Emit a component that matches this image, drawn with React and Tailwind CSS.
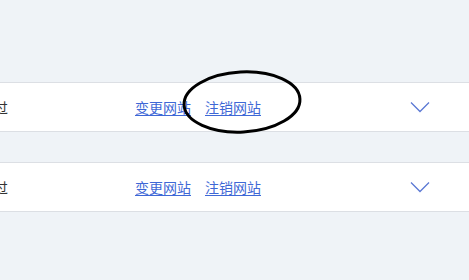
import React from "react";

function Chevron() {
  return (
    <svg width="20" height="12" viewBox="0 0 20 12" className="block">
      <polyline points="1,1.5 10,10.5 19,1.5" fill="none" stroke="#5b78d4" strokeWidth="1.3" />
    </svg>
  );
}

function Row() {
  return (
    <div className="flex h-[50px] items-center border-y border-[#dcdfe4] bg-white text-[14px] leading-none">
      <div className="-ml-[48px] w-[183px] shrink-0 text-[#333]">审核通过</div>
      <a className="text-[#3e68d6] underline underline-offset-2 decoration-1">变更网站</a>
      <a className="ml-[14px] text-[#3e68d6] underline underline-offset-2 decoration-1">注销网站</a>
      <div className="ml-[149px]">
        <Chevron />
      </div>
    </div>
  );
}

export default function App() {
  return (
    <div
      className="relative h-[280px] w-[469px] overflow-hidden bg-[#eff3f7] pt-[82px]"
      style={{ fontFamily: '"Noto Sans CJK SC", "Noto Sans", sans-serif' }}
    >
      <Row />
      <div className="h-[30px]" />
      <Row />
      <svg className="pointer-events-none absolute left-0 top-0" width="469" height="280">
        <ellipse cx="242" cy="102" rx="58" ry="30" fill="none" stroke="#000" strokeWidth="3" transform="rotate(-3 242 102)" />
      </svg>
    </div>
  );
}
